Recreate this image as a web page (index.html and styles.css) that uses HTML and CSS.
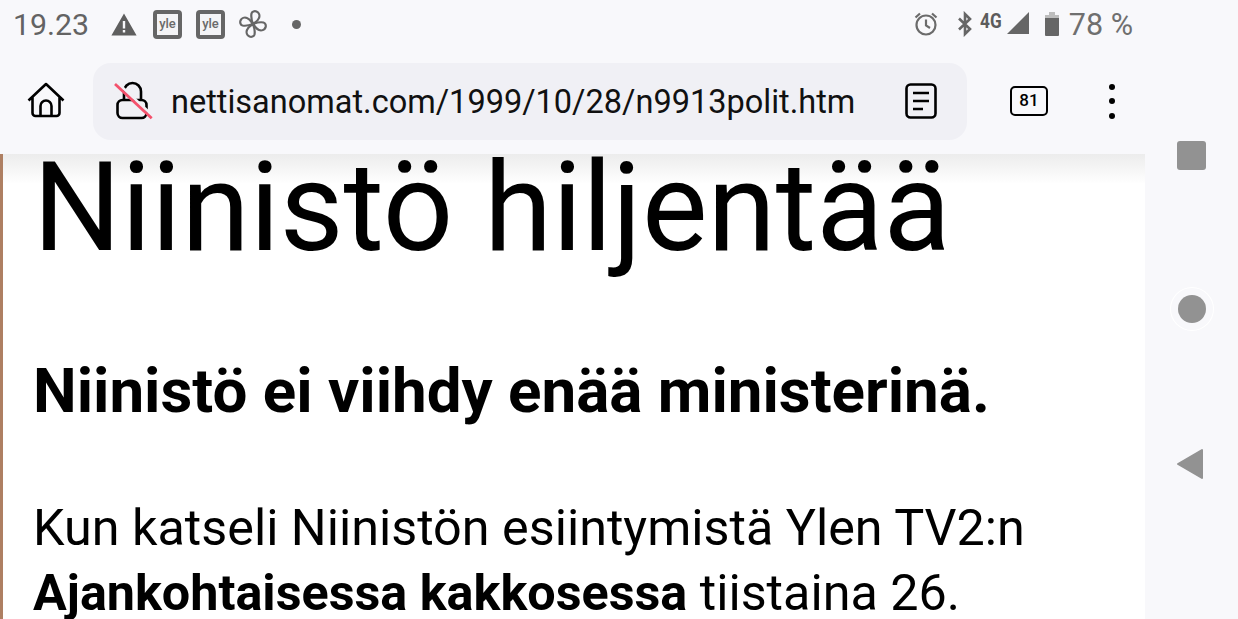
FILE: index.html
```html
<!DOCTYPE html>
<html lang="fi">
<head>
<meta charset="utf-8">
<title>Niinistö hiljentää</title>
<link rel="stylesheet" href="styles.css">
</head>
<body>
<div class="screen">
  <div class="phone">
    <header class="chrome">
      <div class="status">
        <div class="status-left">
          <span class="time">19.23</span>
          <svg class="warn" viewBox="0 0 26 24" width="26" height="24"><path fill="#5f5f5f" fill-rule="evenodd" d="M13 1.500 25.600 23.500H.4ZM11.800 9v7.500h2.400V9ZM11.800 18v2.500h2.400V18Z"/></svg>
          <span class="yle">yle</span>
          <span class="yle">yle</span>
          <svg class="fan" viewBox="0 0 28 28" width="28" height="28"><g fill="none" stroke="#666" stroke-width="2.200" stroke-linejoin="round"><path d="M14 14C12.500 10 12 6 12.500 3.500 13 1.500 15.500.8 17.500 1.500 20 2.500 21 5.500 20 8 19 11 16 12.500 14 14Z"/><path transform="rotate(90 14 14)" d="M14 14C12.500 10 12 6 12.500 3.500 13 1.500 15.500.8 17.500 1.500 20 2.500 21 5.500 20 8 19 11 16 12.500 14 14Z"/><path transform="rotate(180 14 14)" d="M14 14C12.500 10 12 6 12.500 3.500 13 1.500 15.500.8 17.500 1.500 20 2.500 21 5.500 20 8 19 11 16 12.500 14 14Z"/><path transform="rotate(270 14 14)" d="M14 14C12.500 10 12 6 12.500 3.500 13 1.500 15.500.8 17.500 1.500 20 2.500 21 5.500 20 8 19 11 16 12.500 14 14Z"/></g></svg>
          <span class="dot"></span>
        </div>
        <div class="status-right">
          <svg class="alarm" viewBox="0 0 26 26" width="26" height="26"><g fill="none" stroke="#6b6b6b" stroke-width="2.200"><circle cx="13" cy="14" r="9.500"/><path d="M13 8.500V14.500L17 17M2.500 6.500 7 2.500M23.500 6.500 19 2.500"/></g></svg>
          <svg class="bt" viewBox="0 0 16 26" width="16" height="26"><path fill="none" stroke="#666" stroke-width="2.600" d="M2 7.500 13 18 8 23V3L13 8 2 18.500"/></svg>
          <span class="net">4G</span>
          <svg class="signal" viewBox="0 0 24 24" width="24" height="24"><path fill="#666" d="M23 1V23H1Z"/></svg>
          <svg class="battery" viewBox="0 0 16 26" width="16" height="26"><path fill="#bdbdbd" d="M5 1h6v3h4v6H1V4h4Z"/><path fill="#666" d="M1 7h14v17a1 1 0 0 1-1 1H2a1 1 0 0 1-1-1Z"/></svg>
          <span class="percent">78 %</span>
        </div>
      </div>
      <div class="toolbar">
        <svg class="home" viewBox="0 0 38 38" width="38" height="38"><path fill="none" stroke="#000" stroke-width="2.600" stroke-linejoin="round" d="M1.500 18.500 19 2 36.500 18.500M5.500 15V31a3 3 0 0 0 3 3H29.500a3 3 0 0 0 3-3V15M13.500 34V24a5.500 5.500 0 0 1 11 0V34"/></svg>
        <div class="omnibox">
          <svg class="lock" viewBox="0 0 40 40" width="40" height="40"><path fill="none" stroke="#000" stroke-width="2.600" d="M10 19V10.500a8.500 8.500 0 0 1 17 0V19"/><rect x="3.500" y="19" width="29" height="18" rx="5" fill="#f0f0f5" stroke="#000" stroke-width="2.600"/><path stroke="#f0f0f5" stroke-width="3" d="M3 1.500 39.500 35.500"/><path stroke="#f4516c" stroke-width="2.800" d="M1 3 37.700 37.300"/></svg>
          <span class="url">nettisanomat.com/1999/10/28/n9913polit.htm</span>
          <svg class="reader" viewBox="0 0 32 36" width="32" height="36"><rect x="1.500" y="1.500" width="29" height="33" rx="4" fill="none" stroke="#000" stroke-width="2.600"/><path stroke="#000" stroke-width="2.600" d="M8 10H24M8 18H24M8 26H18"/></svg>
        </div>
        <span class="tabs">81</span>
        <div class="menu"><i></i><i></i><i></i></div>
      </div>
    </header>
    <main class="article">
      <h1>Niinistö hiljentää</h1>
      <h2>Niinistö ei viihdy enää ministerinä.</h2>
      <p>Kun katseli Niinistön esiintymistä Ylen TV2:n <strong>Ajankohtaisessa kakkosessa</strong> tiistaina 26.</p>
    </main>
  </div>
  <nav class="navbar">
    <span class="nav-square"></span>
    <span class="nav-circle"></span>
    <svg class="nav-back" viewBox="0 0 28 32" width="28" height="32"><path fill="#929292" stroke="#929292" stroke-width="2" stroke-linejoin="round" d="M2 16 26 2V30Z"/></svg>
  </nav>
</div>
</body>
</html>
```
FILE: styles.css
```css
* { box-sizing: border-box; }
html, body { margin: 0; height: 100%; overflow: hidden; background: #f8f8fb; }
body { font-family: Roboto, "Liberation Sans", sans-serif; color: #000; }

.screen { display: flex; width: 1238px; height: 619px; overflow: hidden; }
.phone { width: 1145px; height: 619px; display: flex; flex-direction: column; overflow: hidden; position: relative; }

.chrome { height: 154px; background: #f8f8fb; flex: none; position: relative; z-index: 1; }

.status { height: 48px; display: flex; justify-content: space-between; align-items: center; padding: 0 12px 0 13px; color: #636363; }
.status-left, .status-right { display: flex; align-items: center; }
.time { font-size: 30.300px; width: 98px; }
.warn { margin-right: 16px; }
.yle { width: 29px; height: 29px; border: 4px solid #666; border-radius: 4px; font-size: 13px; font-weight: 500; line-height: 19px; text-align: center; margin-right: 14px; background: #f4f4f6; color: #6a6a6a; }
.fan { margin-right: 25px; }
.dot { width: 9px; height: 9px; border-radius: 50%; background: #666; }

.alarm { margin-right: 18px; }
.bt { margin-right: 7px; }
.net { font-size: 21px; font-weight: 700; line-height: 1; align-self: flex-start; margin-top: 4px; width: 26px; transform: scaleX(.82); transform-origin: left; color: #5c5c5c; }
.signal { margin-right: 14px; margin-top: -3px; }
.battery { margin-right: 9px; margin-top: -1px; }
.percent { font-size: 30.500px; color: #6f6f6f; }

.toolbar { height: 78px; margin-top: 14px; display: flex; align-items: center; padding-left: 27px; }
.home { flex: none; margin-right: 28px; }
.omnibox { width: 874px; height: 77px; border-radius: 18px; background: #f0f0f5; display: flex; align-items: center; padding-left: 21px; }
.lock { flex: none; margin-right: 17px; }
.url { font-size: 32.500px; white-space: nowrap; width: 734px; color: #111; padding-top: 2px; }
.reader { flex: none; }
.tabs { width: 38px; height: 30px; border: 2.800px solid #000; border-radius: 5px; font-size: 17px; font-weight: 500; line-height: 24px; text-align: center; margin-left: 43px; }
.menu { display: flex; flex-direction: column; gap: 8.500px; margin-left: 61px; }
.menu i { width: 6px; height: 6px; border-radius: 50%; background: #000; }

.article { flex: 1; background: #fff; border-left: 3px solid #ae7f62; padding-left: 30px; position: relative; overflow: hidden; }
.article::before { content: ""; position: absolute; left: -3px; right: 0; top: 0; height: 30px; background: linear-gradient(#ececec, rgba(255,255,255,0)); }
.article > * { position: relative; }

h1 { font-size: 123.700px; font-weight: 400; line-height: 146px; margin: -19px 0 0; white-space: nowrap; }
h2 { font-size: 61.900px; font-weight: 700; line-height: 76px; margin: 72px 0 0; white-space: nowrap; }
p { font-size: 50.300px; line-height: 65px; margin: 66px 0 0; width: 1060px; }
p strong { font-weight: 700; }

.navbar { width: 93px; height: 619px; background: #f8f8fb; display: flex; flex-direction: column; align-items: center; padding-top: 141px; }
.nav-square { width: 29px; height: 29px; border-radius: 3px; background: #929292; }
.nav-circle { width: 28px; height: 28px; border-radius: 50%; background: #929292; box-shadow: 0 0 0 7px #f8f8fb, 0 0 0 8px #fff; margin-top: 125px; }
.nav-back { margin-top: 125px; margin-left: -3px; }
```
